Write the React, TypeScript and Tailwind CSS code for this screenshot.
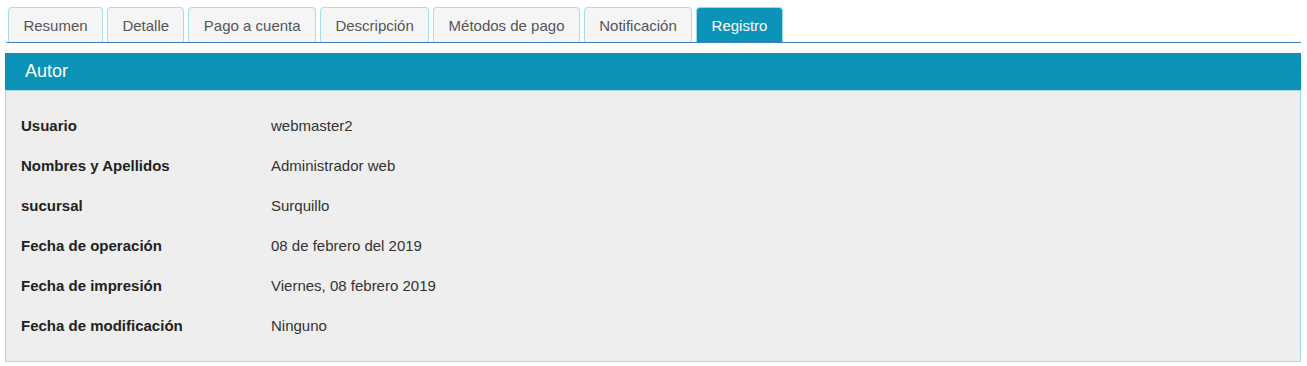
import React from "react";

const tabs = [
  "Resumen",
  "Detalle",
  "Pago a cuenta",
  "Descripción",
  "Métodos de pago",
  "Notificación",
  "Registro",
];

const rows: [string, string][] = [
  ["Usuario", "webmaster2"],
  ["Nombres y Apellidos", "Administrador web"],
  ["sucursal", "Surquillo"],
  ["Fecha de operación", "08 de febrero del 2019"],
  ["Fecha de impresión", "Viernes, 08 febrero 2019"],
  ["Fecha de modificación", "Ninguno"],
];

export default function App() {
  return (
    <div
      className="w-[1307px] h-[366px] bg-white pt-[7px] pl-[5px] pr-[6px]"
      style={{ fontFamily: '"Liberation Sans", Arial, sans-serif' }}
    >
      <div className="flex gap-[4px] pl-[3px] border-b border-[#3a80bd] rounded-bl-[3px]">
        {tabs.map((t) => {
          const active = t === "Registro";
          return (
            <div
              key={t}
              className={
                "h-[35px] px-[14.4px] pt-[2px] flex items-center text-[15px] border border-b-0 rounded-t-[4px] " +
                (active
                  ? "bg-[#0b93b8] text-white border-[#9fd8ea]"
                  : "bg-[#f5f5f5] text-[#555555] border-[#a9dcec]")
              }
            >
              {t}
            </div>
          );
        })}
      </div>
      <div className="mt-[10px]">
        <div className="h-[37px] bg-[#0b93b7] text-white text-[18px] flex items-center pl-[20px]">
          Autor
        </div>
        <div className="bg-[#eeeeee] border border-[#a8dbea] pt-[15px] pb-[15px] pl-[15px]">
          {rows.map(([k, v]) => (
            <div key={k} className="h-[40px] flex items-center text-[15px]">
              <div className="w-[250px] font-bold text-[#222222]">{k}</div>
              <div className="text-[#333333]">{v}</div>
            </div>
          ))}
        </div>
      </div>
    </div>
  );
}
